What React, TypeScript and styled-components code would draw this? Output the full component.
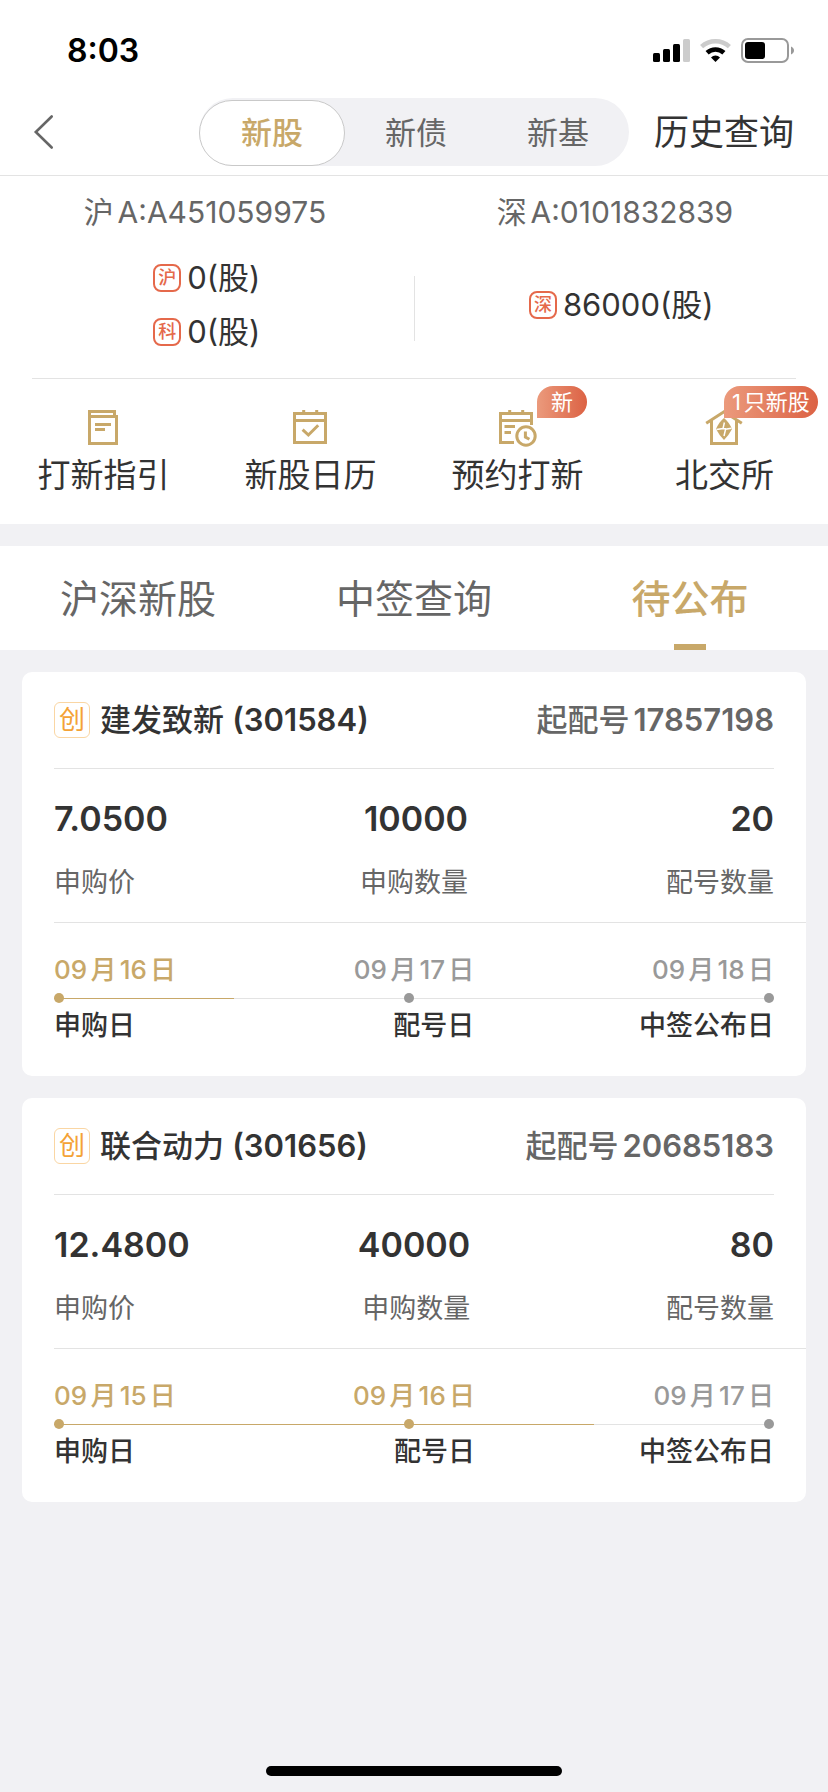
import React from 'react';
import styled, { createGlobalStyle, css } from 'styled-components';

const color = {
  gold: '#c8a869',
  ink: '#333333',
  sub: '#666666',
  muted: '#999999',
  line: '#e3e3e3',
  band: '#f1f1f4',
  red: '#e5694b',
  orange: '#f4a236',
};

const GlobalStyle = createGlobalStyle`
  *, *::before, *::after { box-sizing: border-box; }
  body {
    margin: 0;
    background: ${color.band};
    color: ${color.ink};
    font-family: Inter, 'Noto Sans CJK SC', sans-serif;
    font-size: 30px;
    text-autospace: normal;
  }
  button {
    margin: 0;
    padding: 0;
    border: 0;
    background: none;
    color: inherit;
    font: inherit;
    cursor: pointer;
  }
  a { color: inherit; text-decoration: none; }
  h2, p, ul, ol, dl, dd { margin: 0; padding: 0; list-style: none; }
  svg { display: block; overflow: visible; }
`;

const Page = styled.div`
  display: flex;
  flex-direction: column;
  min-height: 100vh;
`;

const StatusBar = styled.div`
  display: flex;
  align-items: center;
  justify-content: space-between;
  height: 98px;
  padding: 3px 34px 0 67px;
  background: #fff;
`;

const Clock = styled.span`
  color: #000;
  font-size: 32px;
  font-weight: 600;
  line-height: 40px;
`;

const Header = styled.header`
  display: grid;
  grid-template-columns: 1fr auto 1fr;
  align-items: center;
  padding: 0 34px 9px;
  border-bottom: 1px solid ${color.line};
  background: #fff;
`;

const BackButton = styled.button`
  justify-self: start;
`;

const HistoryLink = styled.a`
  justify-self: end;
  font-size: 35px;
  line-height: 48px;
`;

const Segments = styled.div`
  display: flex;
  align-items: flex-end;
  width: 430px;
  height: 68px;
  border-radius: 34px;
  background: ${color.band};
`;

const Segment = styled.button<{ $active?: boolean }>`
  flex: 1;
  height: 66px;
  border-radius: 33px;
  color: ${color.sub};
  font-size: 31px;
  line-height: 40px;
  ${(p) =>
    p.$active &&
    css`
      flex: 0 0 146px;
      border: 1px solid #c9c9c9;
      background: #fff;
      color: ${color.gold};
      font-weight: 500;
    `}
`;

const Overview = styled.section`
  padding-top: 15px;
  background: #fff;
`;

const Accounts = styled.div`
  display: grid;
  grid-template-columns: 1fr 1fr;
  padding-right: 8px;
  color: ${color.sub};
  line-height: 42px;
  text-align: center;
`;

const Holdings = styled.div`
  display: grid;
  grid-template-columns: 1fr 1px 1fr;
  align-items: center;
  padding: 18px 0 19px;
`;

const HoldingDivider = styled.span`
  height: 65px;
  margin-top: 6px;
  background: ${color.line};
`;

const OverviewRule = styled.hr`
  height: 1px;
  margin: 0 32px;
  border: 0;
  background: ${color.line};
`;

const HoldingList = styled.ul`
  display: flex;
  flex-direction: column;
  align-items: center;
`;

const Holding = styled.li`
  display: flex;
  align-items: center;
  gap: 6px;
  height: 54px;
  font-size: 31px;
  line-height: 40px;
`;

const MarketTag = styled.span`
  width: 28px;
  height: 28px;
  border: 2px solid ${color.red};
  border-radius: 8px;
  color: ${color.red};
  font-size: 18px;
  font-weight: 500;
  line-height: 24px;
  text-align: center;
`;

const Shortcuts = styled.nav`
  display: grid;
  grid-template-columns: repeat(4, 1fr);
  padding: 31px 0 29px;
  background: #fff;
`;

const Shortcut = styled.a`
  display: flex;
  flex-direction: column;
  align-items: center;
  gap: 10px;
  font-size: 33px;
  line-height: 40px;
`;

const IconWrap = styled.span`
  position: relative;
`;

const Badge = styled.span<{ $wide?: boolean }>`
  position: absolute;
  top: -24px;
  left: ${(p) => (p.$wide ? 17 : 37)}px;
  padding: 0 ${(p) => (p.$wide ? 8 : 14)}px;
  border-radius: 16px 16px 16px 0;
  background: linear-gradient(90deg, #eb9a7c, #dc6244);
  color: #fff;
  font-size: 22px;
  line-height: 32px;
  white-space: nowrap;
`;

const Tabs = styled.div`
  display: grid;
  grid-template-columns: repeat(3, 1fr);
  margin-top: 22px;
  background: #fff;
`;

const Tab = styled.button<{ $active?: boolean }>`
  display: flex;
  flex-direction: column;
  align-items: center;
  justify-content: space-between;
  height: 104px;
  padding-top: 28px;
  color: ${(p) => (p.$active ? color.gold : color.sub)};
  font-size: 39px;
  font-weight: ${(p) => (p.$active ? 500 : 400)};
  line-height: 50px;
  &::after {
    content: '';
    width: 32px;
    height: 6px;
    background: ${(p) => (p.$active ? color.gold : 'transparent')};
  }
`;

const Cards = styled.main`
  display: flex;
  flex-direction: column;
  gap: 22px;
  padding: 22px;
`;

const Card = styled.article`
  border-radius: 10px;
  background: #fff;
`;

const CardHeader = styled.div`
  display: flex;
  align-items: center;
  height: 97px;
  margin: 0 32px;
  border-bottom: 1px solid ${color.line};
`;

const BoardTag = styled.span`
  width: 36px;
  height: 36px;
  margin-right: 10px;
  border: 1px solid #fad6a3;
  border-radius: 6px;
  color: ${color.orange};
  font-size: 26px;
  line-height: 34px;
  text-align: center;
`;

const StockName = styled.h2`
  flex: 1;
  font-size: 31px;
  font-weight: 500;
  line-height: 40px;
`;

const StartNumber = styled.p`
  color: ${color.sub};
  font-size: 31px;
  font-weight: 500;
  line-height: 40px;
`;

const Digits = styled.span`
  font-weight: 600;
`;

const threeColumns = css`
  display: grid;
  grid-template-columns: repeat(3, 1fr);
  > * {
    justify-self: center;
    text-align: right;
  }
  > :first-child {
    justify-self: start;
    text-align: left;
  }
  > :last-child {
    justify-self: end;
  }
`;

const Stats = styled.dl`
  ${threeColumns}
  margin-left: 32px;
  padding: 25px 32px 21px 0;
  border-bottom: 1px solid ${color.line};
`;

const Stat = styled.div`
  display: flex;
  flex-direction: column-reverse;
  gap: 21px;
`;

const StatValue = styled.dd`
  font-size: 34px;
  font-weight: 600;
  line-height: 50px;
`;

const StatLabel = styled.dt`
  color: ${color.sub};
  font-size: 27px;
  line-height: 36px;
`;

const Timeline = styled.div`
  display: grid;
  align-items: center;
  padding: 29px 32px 32px;
`;

const Steps = styled.ol`
  ${threeColumns}
  grid-area: 1 / 1;
`;

const Step = styled.li`
  display: flex;
  flex-direction: column;
  gap: 20px;
  font-size: 27px;
  font-weight: 500;
  line-height: 36px;
`;

const StepDate = styled.time<{ $done: boolean }>`
  color: ${(p) => (p.$done ? color.gold : color.muted)};
  font-size: 26px;
`;

const Track = styled.div<{ $progress: number }>`
  display: grid;
  grid-template-columns: 1fr 1fr;
  grid-area: 1 / 1;
  background: linear-gradient(
      90deg,
      ${color.gold} ${(p) => p.$progress}%,
      ${color.line} ${(p) => p.$progress}%
    )
    0 5px / 100% 1px no-repeat;
`;

const Dot = styled.span<{ $done: boolean; $column: number; $end: boolean }>`
  grid-row: 1;
  grid-column: ${(p) => p.$column};
  justify-self: ${(p) => (p.$end ? 'end' : 'start')};
  width: 10px;
  height: 10px;
  border-radius: 5px;
  background: ${(p) => (p.$done ? color.gold : color.muted)};
`;

const HomeIndicator = styled.div`
  width: 296px;
  height: 10px;
  margin: auto auto 16px;
  border-radius: 5px;
  background: #000;
`;

const StatusIcons = () => (
  <svg width="141" height="26" viewBox="0 0 141 26" aria-hidden="true">
    <rect x="0" y="15" width="7" height="9" rx="1.5" />
    <rect x="10" y="11" width="7" height="13" rx="1.5" />
    <rect x="20" y="6" width="7" height="18" rx="1.5" />
    <rect x="30" y="1" width="7" height="23" rx="1.5" fill="#ccc" />
    <g fill="none" strokeWidth="4.6">
      <path d="M48.6 8.6A20.7 20.7 0 0 1 76.4 8.6" stroke="#ccc" />
      <path d="M54.1 14.8A12.4 12.4 0 0 1 70.9 14.8" stroke="#000" />
    </g>
    <path d="M62.5 24L58 19.4A6.4 6.4 0 0 1 67 19.4Z" />
    <rect x="89" y="1" width="46" height="23" rx="6" fill="none" stroke="#999" strokeWidth="2" />
    <rect x="92" y="4" width="20" height="17" rx="3" />
    <path d="M138 8.5C142 10 142 15 138 16.5Z" fill="#999" />
  </svg>
);

const GuideIcon = () => (
  <svg width="35" height="35" viewBox="0 0 35 35" fill="none" stroke={color.gold} strokeWidth="3" aria-hidden="true">
    <path d="M3.5 6.5V1.5H28.5V6.5" />
    <rect x="3.5" y="6.5" width="27" height="27" />
    <path d="M9 14.5H25M9 19.5H19" />
  </svg>
);

const CalendarIcon = () => (
  <svg width="35" height="35" viewBox="0 0 35 35" fill="none" stroke={color.gold} strokeWidth="3" aria-hidden="true">
    <rect x="1.5" y="3.5" width="31" height="29" />
    <path d="M10.7 0V3M23.7 0V3M1 10.5H33" />
    <path d="M9.6 19.6L15.4 25L25.2 15.2" />
  </svg>
);

const ReserveIcon = () => (
  <svg width="35" height="35" viewBox="0 0 35 35" fill="none" stroke={color.gold} strokeWidth="3" aria-hidden="true">
    <path d="M14 32.5H.5V3.5H31.5V15" />
    <path d="M9.7 0V3M22.7 0V3M0 10.5H32M4.5 16.5H15M4.5 22.5H11" />
    <circle cx="26" cy="26" r="9.2" />
    <path d="M25.4 21.5V27L29.4 29.2" />
  </svg>
);

const HouseIcon = () => (
  <svg width="35" height="35" viewBox="0 0 35 35" fill="none" stroke={color.gold} strokeWidth="3" aria-hidden="true">
    <path d="M-.8 13.2L17 1.8L34.8 13.2" />
    <path d="M4.5 10V33.5H29.5V10" />
    <path d="M17 8Q22 12 25 19Q22 25 17 30Q12 25 9 19Q12 12 17 8Z" fill={color.gold} stroke="none" />
    <path d="M17.4 12.5L16 18.6L9.5 19.4M24.5 18.2L18.6 19.2L17 26M16 18.8H19" stroke="#fff" strokeWidth="1.5" />
  </svg>
);

const shortcuts = [
  { label: '打新指引', Icon: GuideIcon },
  { label: '新股日历', Icon: CalendarIcon },
  { label: '预约打新', Icon: ReserveIcon, badge: '新' },
  { label: '北交所', Icon: HouseIcon, badge: '1只新股' },
];

const stocks = [
  {
    name: '建发致新',
    code: '301584',
    start: '17857198',
    stats: [
      ['申购价', '7.0500'],
      ['申购数量', '10000'],
      ['配号数量', '20'],
    ],
    progress: 25,
    steps: [
      { date: '09月16日', label: '申购日', done: true },
      { date: '09月17日', label: '配号日', done: false },
      { date: '09月18日', label: '中签公布日', done: false },
    ],
  },
  {
    name: '联合动力',
    code: '301656',
    start: '20685183',
    stats: [
      ['申购价', '12.4800'],
      ['申购数量', '40000'],
      ['配号数量', '80'],
    ],
    progress: 75,
    steps: [
      { date: '09月15日', label: '申购日', done: true },
      { date: '09月16日', label: '配号日', done: true },
      { date: '09月17日', label: '中签公布日', done: false },
    ],
  },
];

const HoldingRow = ({ market, amount }: { market: string; amount: string }) => (
  <Holding>
    <MarketTag>{market}</MarketTag>
    <span>{amount}(股)</span>
  </Holding>
);

const StockCard = ({ stock }: { stock: (typeof stocks)[number] }) => (
  <Card>
    <CardHeader>
      <BoardTag>创</BoardTag>
      <StockName>
        {stock.name} <Digits>({stock.code})</Digits>
      </StockName>
      <StartNumber>
        起配号<Digits>{stock.start}</Digits>
      </StartNumber>
    </CardHeader>
    <Stats>
      {stock.stats.map(([label, value]) => (
        <Stat key={label}>
          <StatLabel>{label}</StatLabel>
          <StatValue>{value}</StatValue>
        </Stat>
      ))}
    </Stats>
    <Timeline>
      <Track $progress={stock.progress}>
        {stock.steps.map((step, i) => (
          <Dot key={step.label} $done={step.done} $column={i === 2 ? 2 : 1} $end={i > 0} />
        ))}
      </Track>
      <Steps>
        {stock.steps.map((step) => (
          <Step key={step.label}>
            <StepDate $done={step.done}>{step.date}</StepDate>
            <span>{step.label}</span>
          </Step>
        ))}
      </Steps>
    </Timeline>
  </Card>
);

export default function App() {
  return (
    <Page>
      <GlobalStyle />
      <StatusBar>
        <Clock>8:03</Clock>
        <StatusIcons />
      </StatusBar>
      <Header>
        <BackButton type="button" aria-label="返回">
          <svg width="20" height="34" viewBox="0 0 20 34" fill="none" stroke={color.sub} strokeWidth="2.6" strokeLinecap="round">
            <path d="M17.7 1.5L1.8 17L17.7 32.5" />
          </svg>
        </BackButton>
        <Segments role="tablist">
          <Segment type="button" role="tab" aria-selected="true" $active>新股</Segment>
          <Segment type="button" role="tab" aria-selected="false">新债</Segment>
          <Segment type="button" role="tab" aria-selected="false">新基</Segment>
        </Segments>
        <HistoryLink href="#history">历史查询</HistoryLink>
      </Header>
      <Overview>
        <Accounts>
          <span>沪A:A451059975</span>
          <span>深A:0101832839</span>
        </Accounts>
        <Holdings>
          <HoldingList>
            <HoldingRow market="沪" amount="0" />
            <HoldingRow market="科" amount="0" />
          </HoldingList>
          <HoldingDivider />
          <HoldingList>
            <HoldingRow market="深" amount="86000" />
          </HoldingList>
        </Holdings>
        <OverviewRule />
      </Overview>
      <Shortcuts>
        {shortcuts.map(({ label, Icon, badge }) => (
          <Shortcut key={label} href="#shortcut">
            <IconWrap>
              <Icon />
              {badge && <Badge $wide={badge.length > 1}>{badge}</Badge>}
            </IconWrap>
            {label}
          </Shortcut>
        ))}
      </Shortcuts>
      <Tabs role="tablist">
        <Tab type="button" role="tab" aria-selected="false">沪深新股</Tab>
        <Tab type="button" role="tab" aria-selected="false">中签查询</Tab>
        <Tab type="button" role="tab" aria-selected="true" $active>待公布</Tab>
      </Tabs>
      <Cards>
        {stocks.map((stock) => (
          <StockCard key={stock.code} stock={stock} />
        ))}
      </Cards>
      <HomeIndicator />
    </Page>
  );
}
